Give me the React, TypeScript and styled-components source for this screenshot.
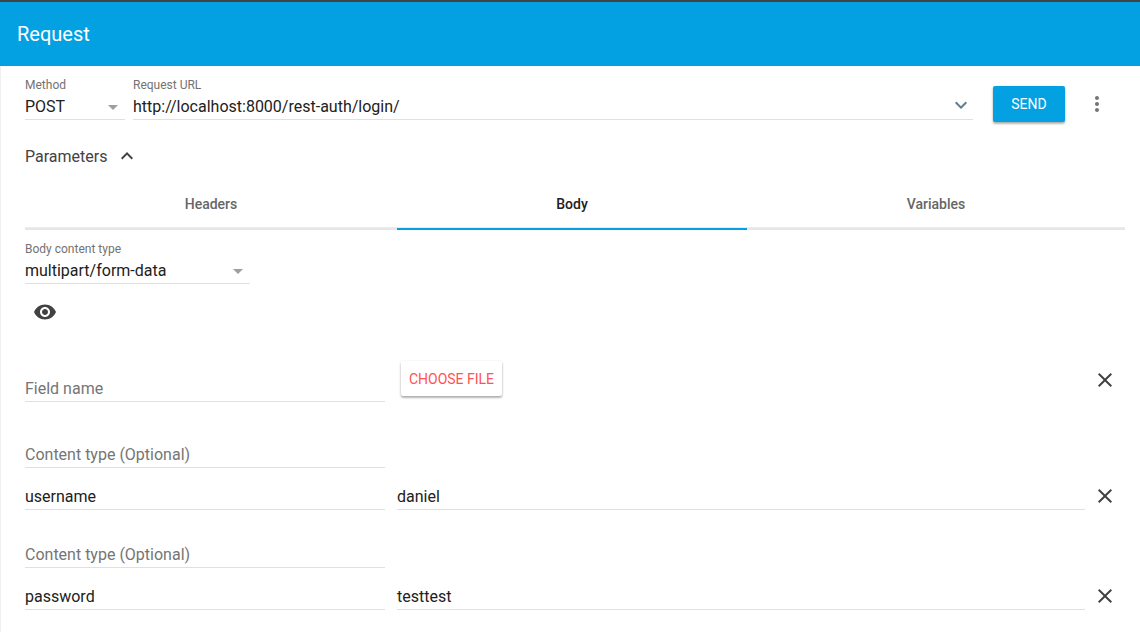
import React from "react";
import styled, { createGlobalStyle } from "styled-components";

const GlobalStyle = createGlobalStyle`
  * {
    box-sizing: border-box;
  }
  html, body {
    margin: 0;
    padding: 0;
    background: #fff;
    overflow: hidden;
  }
  body {
    font-family: Roboto, "Liberation Sans", sans-serif;
    color: #212121;
  }
`;

const Page = styled.div`
  width: 1140px;
  height: 632px;
  overflow: hidden;
  display: flex;
  flex-direction: column;
`;

const Header = styled.header`
  height: 66px;
  flex: none;
  border-top: 2px solid #424242;
  background: #03a1e2;
  color: #fff;
  font-size: 20px;
  display: flex;
  align-items: center;
  padding-left: 17px;
`;

const Content = styled.main`
  flex: 1;
  border-left: 1px solid #f0f0f0;
  padding: 0 15px 0 24px;
`;

const RequestRow = styled.div`
  display: flex;
  align-items: flex-start;
  gap: 8px;
  padding-top: 11px;
`;

const Field = styled.div<{ $width?: number }>`
  ${(p) => (p.$width ? `width: ${p.$width}px; flex: none;` : "flex: 1;")}
`;

const Label = styled.label`
  display: block;
  height: 16px;
  line-height: 16px;
  font-size: 12px;
  color: #737373;
`;

const Value = styled.div<{ $placeholder?: boolean }>`
  height: 27px;
  padding-top: 2px;
  line-height: 24px;
  font-size: 16px;
  display: flex;
  align-items: center;
  justify-content: space-between;
  border-bottom: 1px solid #e0e0e0;
  color: ${(p) => (p.$placeholder ? "#757575" : "#212121")};
`;

const Caret = styled.span`
  width: 0;
  height: 0;
  margin-right: 7px;
  border-left: 5px solid transparent;
  border-right: 5px solid transparent;
  border-top: 5px solid #9e9e9e;
`;

const Icon = styled.svg<{ $color?: string }>`
  display: block;
  flex: none;
  width: 24px;
  height: 24px;
  fill: ${(p) => p.$color || "#424242"};
`;

const UrlChevron = styled(Icon)`
  margin-top: -4px;
`;

const SendButton = styled.button`
  width: 72px;
  height: 36px;
  margin: 9px 0 0 12px;
  flex: none;
  border: 0;
  border-radius: 2px;
  background: #03a1e2;
  color: #fff;
  font: 400 14px Roboto, sans-serif;
  box-shadow: 0 2px 2px rgba(0, 0, 0, 0.2), 0 1px 3px rgba(0, 0, 0, 0.2);
`;

const MenuSlot = styled.div`
  margin: 15px 16px 0 12px;
  flex: none;
`;

const ParamsToggle = styled.div`
  display: flex;
  align-items: center;
  gap: 8px;
  height: 24px;
  margin-top: 22px;
  font-size: 16px;
  color: #424242;
`;

const Tabs = styled.div`
  display: grid;
  grid-template-columns: 372px 350px 378px;
  height: 50px;
  margin-top: 12px;
`;

const Tab = styled.div<{ $active?: boolean }>`
  display: flex;
  align-items: center;
  justify-content: center;
  font-size: 14px;
  font-weight: 500;
  color: ${(p) => (p.$active ? "#212121" : "#666")};
  border-bottom: 2px solid ${(p) => (p.$active ? "#03a1e2" : "#e6e6e6")};
  box-shadow: inset 0 -1px 0 #ececec;
`;

const BodyType = styled.div`
  width: 225px;
  margin-top: 11px;
`;

const EyeSlot = styled.div`
  margin: 16px 0 0 8px;
`;

const FileRow = styled.div`
  display: flex;
  align-items: flex-start;
  height: 41px;
  margin-top: 37px;
`;

const FileName = styled.div`
  width: 360px;
  flex: none;
  align-self: flex-end;
`;

const ChooseButton = styled.button`
  flex: none;
  width: 101px;
  height: 35px;
  margin-left: 16px;
  padding: 0;
  border: 0;
  border-radius: 2px;
  background: #fff;
  color: #ff5252;
  font: 400 14px Roboto, sans-serif;
  box-shadow: 0 2px 2px rgba(0, 0, 0, 0.2), 0 1px 3px rgba(0, 0, 0, 0.2);
`;

const FileClose = styled.div`
  margin: 7px 8px 0 auto;
`;

const TypeField = styled.div<{ $gap: number }>`
  width: 360px;
  margin-top: ${(p) => p.$gap}px;
`;

const EntryRow = styled.div`
  display: flex;
  align-items: flex-start;
  margin-top: 15px;
`;

const EntryKey = styled.div`
  width: 360px;
  margin-right: 12px;
  flex: none;
`;

const EntryValue = styled.div`
  flex: 1;
`;

const EntryClose = styled.div`
  margin: 1px 8px 0;
`;

const CloseIcon = () => (
  <Icon viewBox="0 0 24 24">
    <path d="M19 6.41L17.59 5 12 10.59 6.41 5 5 6.41 10.59 12 5 17.59 6.41 19 12 13.41 17.59 19 19 17.59 13.41 12z" />
  </Icon>
);

const entries = [
  { name: "username", value: "daniel", gap: 39 },
  { name: "password", value: "testtest", gap: 31 },
];

export default function App() {
  return (
    <Page>
      <GlobalStyle />
      <Header>Request</Header>
      <Content>
        <RequestRow>
          <Field $width={100}>
            <Label>Method</Label>
            <Value>
              POST
              <Caret />
            </Value>
          </Field>
          <Field>
            <Label>Request URL</Label>
            <Value>
              http://localhost:8000/rest-auth/login/
              <UrlChevron viewBox="0 0 24 24" $color="#607d8b">
                <path d="M16.59 8.59L12 13.17 7.41 8.59 6 10l6 6 6-6z" />
              </UrlChevron>
            </Value>
          </Field>
          <SendButton>SEND</SendButton>
          <MenuSlot>
            <Icon viewBox="0 0 24 24" $color="#757575">
              <path d="M12 8c1.1 0 2-.9 2-2s-.9-2-2-2-2 .9-2 2 .9 2 2 2zm0 2c-1.1 0-2 .9-2 2s.9 2 2 2 2-.9 2-2-.9-2-2-2zm0 6c-1.1 0-2 .9-2 2s.9 2 2 2 2-.9 2-2-.9-2-2-2z" />
            </Icon>
          </MenuSlot>
        </RequestRow>

        <ParamsToggle>
          Parameters
          <Icon viewBox="0 0 24 24">
            <path d="M12 8l-6 6 1.41 1.41L12 10.83l4.59 4.58L18 14z" />
          </Icon>
        </ParamsToggle>

        <Tabs>
          <Tab>Headers</Tab>
          <Tab $active>Body</Tab>
          <Tab>Variables</Tab>
        </Tabs>

        <BodyType>
          <Label>Body content type</Label>
          <Value>
            multipart/form-data
            <Caret />
          </Value>
        </BodyType>

        <EyeSlot>
          <Icon viewBox="0 0 24 24">
            <path d="M12 4.5C7 4.5 2.73 7.61 1 12c1.73 4.39 6 7.5 11 7.5s9.27-3.11 11-7.5c-1.73-4.39-6-7.5-11-7.5zM12 17c-2.76 0-5-2.24-5-5s2.24-5 5-5 5 2.24 5 5-2.24 5-5 5zm0-8c-1.66 0-3 1.34-3 3s1.34 3 3 3 3-1.34 3-3-1.34-3-3-3z" />
          </Icon>
        </EyeSlot>

        <FileRow>
          <FileName>
            <Value $placeholder>Field name</Value>
          </FileName>
          <ChooseButton>CHOOSE FILE</ChooseButton>
          <FileClose>
            <CloseIcon />
          </FileClose>
        </FileRow>

        {entries.map((entry) => (
          <React.Fragment key={entry.name}>
            <TypeField $gap={entry.gap}>
              <Value $placeholder>Content type (Optional)</Value>
            </TypeField>
            <EntryRow>
              <EntryKey>
                <Value>{entry.name}</Value>
              </EntryKey>
              <EntryValue>
                <Value>{entry.value}</Value>
              </EntryValue>
              <EntryClose>
                <CloseIcon />
              </EntryClose>
            </EntryRow>
          </React.Fragment>
        ))}
      </Content>
    </Page>
  );
}
